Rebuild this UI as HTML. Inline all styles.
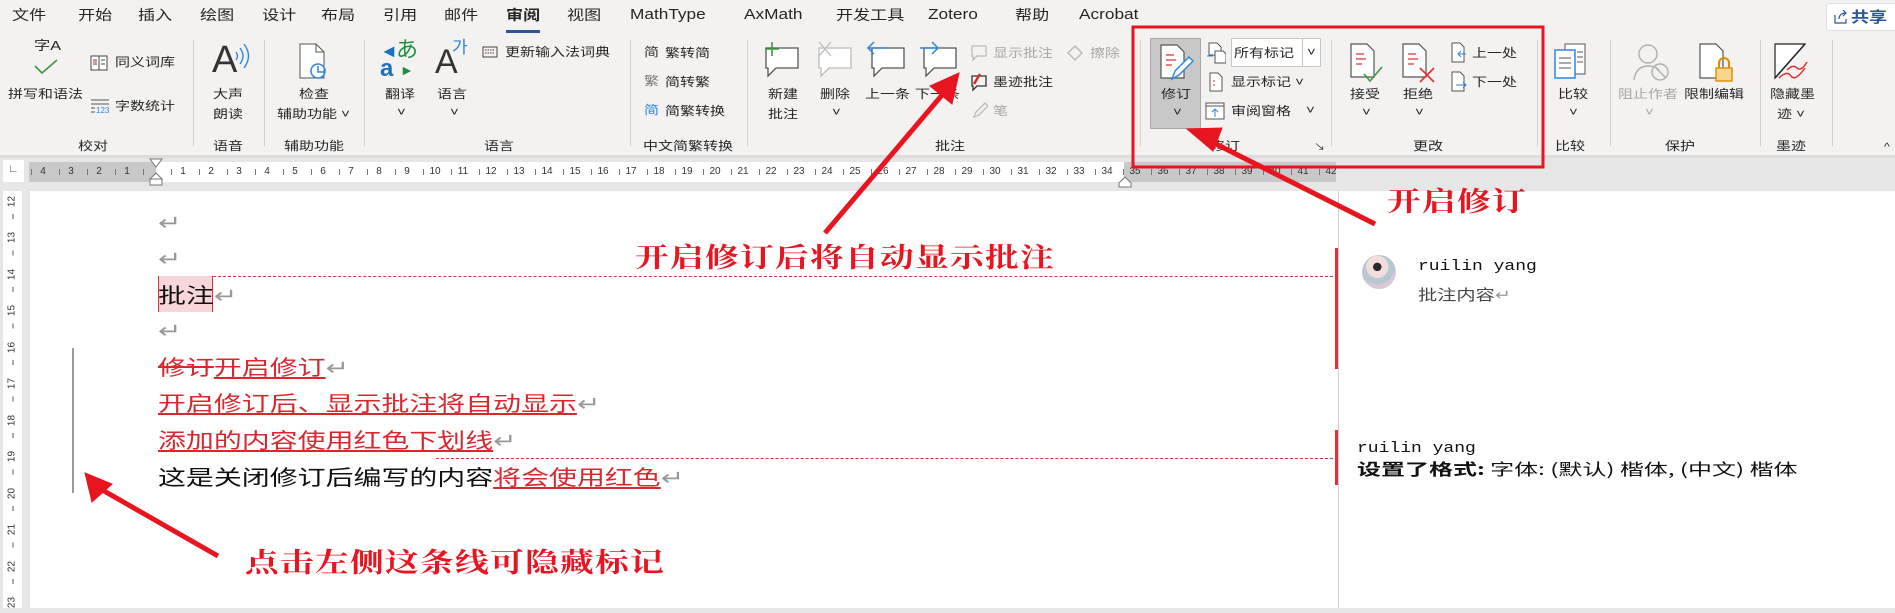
<!DOCTYPE html>
<html><head><meta charset="utf-8">
<style>
*{margin:0;padding:0;box-sizing:border-box}
body{width:1895px;height:608px;overflow:hidden;background:#e6e6e6;font-family:"Liberation Sans","Noto Sans CJK SC",sans-serif;position:relative;color:#262626}
.a{position:absolute;white-space:nowrap}
.s{transform:scaleX(1.28);transform-origin:0 50%}
.t{position:absolute;white-space:nowrap;font-size:12px;line-height:16px;transform:scaleX(1.25);transform-origin:0 50%;color:#262626}
.g{color:#a6a6a6}
.tab{position:absolute;top:6px;font-size:14px;line-height:18px;transform:scaleX(1.22);transform-origin:0 50%;color:#262626}
.sep{position:absolute;top:40px;width:1px;height:106px;background:#d0d0d0}
.rn{position:absolute;top:164px;font-size:10px;line-height:16px;color:#333;width:20px;text-align:center}
.vn{position:absolute;left:2px;width:20px;font-size:10px;color:#333;text-align:center;transform:rotate(-90deg)}
.doc{position:absolute;left:158px;font-size:21px;line-height:30px;font-family:"Noto Sans CJK SC",sans-serif;transform:scaleX(1.33);transform-origin:0 50%;white-space:nowrap;color:#111}
.r{color:#d9272e;text-decoration:underline;text-decoration-color:#d9272e}
.p{color:#999}
.ann{position:absolute;color:#e8141f;font-family:"Noto Serif CJK SC",serif;font-weight:bold;font-size:27px;line-height:30px;transform:scaleX(1.25);transform-origin:0 50%;white-space:nowrap;letter-spacing:1px}
</style></head><body>
<div class="a" style="left:0;top:0;width:1895px;height:155px;background:#f3f2f1"></div>
<div class="a" style="left:0;top:155px;width:1895px;height:3px;background:#dcdcdc"></div>
<div class="tab" style="left:12px">文件</div>
<div class="tab" style="left:78px">开始</div>
<div class="tab" style="left:138px">插入</div>
<div class="tab" style="left:200px">绘图</div>
<div class="tab" style="left:262px">设计</div>
<div class="tab" style="left:321px">布局</div>
<div class="tab" style="left:383px">引用</div>
<div class="tab" style="left:444px">邮件</div>
<div class="tab" style="left:506px;font-weight:bold">审阅</div>
<div class="a" style="left:506px;top:30px;width:34px;height:3px;background:#2b579a"></div>
<div class="tab" style="left:567px">视图</div>
<div class="tab" style="left:630px;font-size:15px;transform:scaleX(1.15)">MathType</div>
<div class="tab" style="left:744px;font-size:15px;transform:scaleX(1.15)">AxMath</div>
<div class="tab" style="left:836px">开发工具</div>
<div class="tab" style="left:928px;font-size:15px;transform:scaleX(1.15)">Zotero</div>
<div class="tab" style="left:1015px">帮助</div>
<div class="tab" style="left:1079px;font-size:15px;transform:scaleX(1.15)">Acrobat</div>
<div class="a" style="left:1826px;top:3px;width:72px;height:28px;background:#fff;border:1px solid #e0e0e0;border-radius:3px"></div>
<svg class="a" style="left:1834px;top:10px" width="14" height="14"><path d="M1 5v8h11V9M5 9c0-4 3-6 7-6M9 0l3 3-3 3" fill="none" stroke="#2b579a" stroke-width="1.2"/></svg>
<div class="a" style="left:1851px;top:6px;font-size:15px;font-weight:bold;color:#2b579a;transform:scaleX(1.2);transform-origin:0 50%">共享</div>

<div class="sep" style="left:193px"></div><div class="sep" style="left:264px"></div><div class="sep" style="left:364px"></div>
<div class="sep" style="left:630px"></div><div class="sep" style="left:747px"></div><div class="sep" style="left:1140px"></div>
<div class="sep" style="left:1331px"></div><div class="sep" style="left:1537px"></div><div class="sep" style="left:1610px"></div>
<div class="sep" style="left:1760px"></div><div class="sep" style="left:1832px"></div>

<div class="t" style="left:34px;top:38px;font-size:13px">字A</div>
<svg class="a" style="left:33px;top:58px" width="26" height="18"><path d="M2 8l7 7L24 2" fill="none" stroke="#3c9a3c" stroke-width="1.6"/></svg>
<div class="t" style="left:8px;top:86px">拼写和语法</div>
<svg class="a" style="left:90px;top:55px" width="18" height="16"><rect x="1" y="1" width="16" height="14" fill="#fff" stroke="#444"/><path d="M9 1v14M3 5h4M3 9h4M11 5h4M11 9h4" stroke="#444"/><path d="M3 7h4" stroke="#e03030"/></svg>
<div class="t" style="left:115px;top:54px">同义词库</div>
<svg class="a" style="left:90px;top:98px" width="22" height="16"><path d="M1 2h18M1 6h18M1 10h4M1 14h4" stroke="#555"/><text x="6" y="15" font-size="8" fill="#2e86de" font-family="Liberation Sans">123</text></svg>
<div class="t" style="left:115px;top:98px">字数统计</div>
<div class="t" style="left:78px;top:138px">校对</div>
<div class="a" style="left:212px;top:38px;font-size:38px;line-height:44px;font-family:'Liberation Sans';font-weight:300;color:#333">A</div>
<svg class="a" style="left:234px;top:42px" width="16" height="28"><path d="M2 10q3 4 0 8M6 6q6 8 0 16M10 2q9 12 0 24" fill="none" stroke="#2e86de" stroke-width="1.4"/></svg>
<div class="t" style="left:213px;top:86px">大声</div>
<div class="t" style="left:213px;top:106px">朗读</div>
<div class="t" style="left:213px;top:138px">语音</div>
<svg class="a" style="left:296px;top:42px" width="36" height="40"><path d="M4 2h16l8 8v26H4z" fill="#fff" stroke="#555"/><path d="M20 2v8h8" fill="none" stroke="#555"/><circle cx="22" cy="29" r="7" fill="none" stroke="#2e86de" stroke-width="1.5"/><path d="M22 24v6h6" fill="none" stroke="#2e86de" stroke-width="1.5"/></svg>
<div class="t" style="left:299px;top:86px">检查</div>
<div class="t" style="left:277px;top:106px">辅助功能 ˅</div>
<div class="t" style="left:284px;top:138px">辅助功能</div>
<div class="a" style="left:380px;top:42px;width:18px;height:18px;font-size:18px;font-weight:bold;color:#1f6fbf;line-height:18px">&#9668;</div>
<div class="a" style="left:396px;top:36px;font-size:22px;color:#1f8f3f;font-family:'Noto Sans CJK JP';line-height:24px">あ</div>
<div class="a" style="left:380px;top:56px;font-size:24px;color:#1f6fbf;font-weight:bold;line-height:26px">a</div>
<div class="a" style="left:400px;top:62px;font-size:14px;color:#1f8f3f;line-height:16px">&#9658;</div>
<div class="t" style="left:385px;top:86px">翻译</div><div class="t" style="left:397px;top:104px">˅</div>
<div class="a" style="left:435px;top:42px;font-size:34px;line-height:40px;font-weight:300;color:#333">A</div>
<div class="a" style="left:452px;top:36px;font-size:17px;line-height:20px;color:#2e86de;font-family:'Noto Sans CJK KR'">가</div>
<div class="t" style="left:437px;top:86px">语言</div><div class="t" style="left:450px;top:104px">˅</div>
<svg class="a" style="left:482px;top:46px" width="16" height="12"><rect x="1" y="1" width="14" height="10" fill="none" stroke="#444"/><path d="M3 4h10M3 7h10" stroke="#444" stroke-dasharray="1.5 1"/></svg>
<div class="t" style="left:505px;top:44px">更新输入法词典</div>
<div class="t" style="left:484px;top:138px">语言</div>
<div class="t" style="left:644px;top:44px;color:#333">简</div><div class="t" style="left:665px;top:45px">繁转简</div>
<div class="t" style="left:644px;top:73px;color:#777">繁</div><div class="t" style="left:665px;top:74px">简转繁</div>
<div class="t" style="left:644px;top:102px;color:#2e86de">简</div><div class="t" style="left:665px;top:103px">简繁转换</div>
<div class="t" style="left:643px;top:138px">中文简繁转换</div>
<svg class="a" style="left:762px;top:40px" width="42" height="40"><path d="M4 8h32v20H14l-8 8v-8H4z" fill="#fff" stroke="#555" stroke-width="1.3"/><path d="M10 2v14M3 9h14" stroke="#3c9a3c" stroke-width="1.6"/></svg>
<div class="t" style="left:768px;top:86px">新建</div><div class="t" style="left:768px;top:106px">批注</div>
<svg class="a" style="left:815px;top:40px" width="42" height="40"><path d="M4 8h32v20H14l-8 8v-8H4z" fill="#fff" stroke="#bbb" stroke-width="1.3"/><path d="M4 2l12 14M16 2L4 16" stroke="#bbb" stroke-width="1.3"/></svg>
<div class="t" style="left:820px;top:86px">删除</div><div class="t" style="left:832px;top:104px">˅</div>
<svg class="a" style="left:866px;top:40px" width="42" height="40"><path d="M6 8h32v20H16l-8 8v-8H6z" fill="#fff" stroke="#555" stroke-width="1.3"/><path d="M2 8h18M8 2L2 8l6 6" fill="none" stroke="#2e86de" stroke-width="1.5"/></svg>
<div class="t" style="left:865px;top:86px">上一条</div>
<svg class="a" style="left:918px;top:40px" width="42" height="40"><path d="M6 8h32v20H16l-8 8v-8H6z" fill="#fff" stroke="#555" stroke-width="1.3"/><path d="M2 8h18M14 2l6 6-6 6" fill="none" stroke="#2e86de" stroke-width="1.5"/></svg>
<div class="t" style="left:915px;top:86px">下一条</div>
<svg class="a" style="left:970px;top:44px" width="18" height="18"><path d="M2 2h14v10H7l-4 4v-4H2z" fill="none" stroke="#bbb" stroke-width="1.3"/></svg>
<div class="t g" style="left:993px;top:45px">显示批注</div>
<svg class="a" style="left:1066px;top:44px" width="18" height="18"><path d="M9 2l7 7-7 7-7-7z" fill="none" stroke="#bbb" stroke-width="1.5"/></svg>
<div class="t g" style="left:1090px;top:45px">擦除</div>
<svg class="a" style="left:970px;top:72px" width="18" height="20"><path d="M2 4h14v10H7l-4 4v-4H2z" fill="none" stroke="#333" stroke-width="1.3"/><path d="M4 12l6-10" stroke="#d9272e" stroke-width="2.5"/></svg>
<div class="t" style="left:993px;top:74px">墨迹批注</div>
<svg class="a" style="left:972px;top:101px" width="16" height="18"><path d="M2 16l2-5 9-9 3 3-9 9z" fill="none" stroke="#bbb" stroke-width="1.3"/></svg>
<div class="t g" style="left:993px;top:103px">笔</div>
<div class="t" style="left:935px;top:138px">批注</div>
<div class="a" style="left:1150px;top:38px;width:51px;height:91px;background:#c8c8c8;border:1px solid #a8a8a8"></div>
<svg class="a" style="left:1158px;top:43px" width="36" height="40"><path d="M3 2h16l7 7v26H3z" fill="#fff" stroke="#555" stroke-width="1.2"/><path d="M8 12h8M8 17h10M8 22h6" stroke="#e03030" stroke-width="1.3"/><path d="M14 36l3-8 14-14 4 4-14 14z" fill="#fff" stroke="#2e86de" stroke-width="1.5"/></svg>
<div class="t" style="left:1161px;top:86px">修订</div><div class="t" style="left:1173px;top:104px">˅</div>
<svg class="a" style="left:1206px;top:42px" width="20" height="22"><path d="M3 1h8l4 4v8H3z" fill="#fff" stroke="#555"/><path d="M9 9h8l3 3v9H9z" fill="#fff" stroke="#555"/><path d="M1 14h6" stroke="#2e86de"/></svg>
<div class="a" style="left:1231px;top:38px;width:90px;height:29px;background:#fff;border:1px solid #c6c6c6"></div>
<div class="a" style="left:1302px;top:38px;width:1px;height:29px;background:#c6c6c6"></div>
<div class="t" style="left:1234px;top:45px">所有标记</div><div class="t" style="left:1307px;top:44px">˅</div>
<svg class="a" style="left:1208px;top:72px" width="16" height="20"><path d="M2 1h8l4 4v14H2z" fill="#fff" stroke="#555"/><path d="M5 9h2M5 13h2" stroke="#e03030"/></svg>
<div class="t" style="left:1231px;top:74px">显示标记 ˅</div>
<svg class="a" style="left:1205px;top:102px" width="20" height="18"><rect x="1" y="1" width="18" height="16" fill="#fff" stroke="#555"/><path d="M1 4h18" stroke="#555"/><path d="M10 15V7M7 10l3-3 3 3" fill="none" stroke="#2e86de"/></svg>
<div class="t" style="left:1231px;top:103px">审阅窗格</div><div class="t" style="left:1306px;top:102px">˅</div>
<div class="t" style="left:1210px;top:138px">修订</div>
<div class="t" style="left:1314px;top:139px;font-size:9px">↘</div>
<svg class="a" style="left:1348px;top:42px" width="36" height="42"><path d="M3 2h16l7 7v26H3z" fill="#fff" stroke="#555" stroke-width="1.2"/><path d="M8 12h8M8 17h10M8 22h6" stroke="#e03030" stroke-width="1.3"/><path d="M16 32l6 7 12-14" fill="none" stroke="#3c9a3c" stroke-width="1.6"/></svg>
<div class="t" style="left:1350px;top:86px">接受</div><div class="t" style="left:1362px;top:104px">˅</div>
<svg class="a" style="left:1400px;top:42px" width="36" height="42"><path d="M3 2h16l7 7v26H3z" fill="#fff" stroke="#555" stroke-width="1.2"/><path d="M8 12h8M8 17h10M8 22h6" stroke="#e03030" stroke-width="1.3"/><path d="M20 26l14 14M34 26L20 40" stroke="#e03030" stroke-width="1.6"/></svg>
<div class="t" style="left:1403px;top:86px">拒绝</div><div class="t" style="left:1415px;top:104px">˅</div>
<svg class="a" style="left:1450px;top:42px" width="18" height="22"><path d="M2 1h8l4 4v15H2z" fill="#fff" stroke="#555"/><path d="M16 12H8M11 9l-3 3 3 3" fill="none" stroke="#2e86de"/></svg>
<div class="t" style="left:1472px;top:45px">上一处</div>
<svg class="a" style="left:1450px;top:71px" width="18" height="22"><path d="M2 1h8l4 4v15H2z" fill="#fff" stroke="#555"/><path d="M6 14h10M13 11l3 3-3 3" fill="none" stroke="#2e86de"/></svg>
<div class="t" style="left:1472px;top:74px">下一处</div>
<div class="t" style="left:1413px;top:138px">更改</div>
<svg class="a" style="left:1553px;top:42px" width="36" height="40"><path d="M12 2h20v30H12z" fill="#fff" stroke="#555"/><rect x="2" y="8" width="20" height="28" fill="#fff" stroke="#2e86de" stroke-width="1.5"/><path d="M6 16h12M6 21h12M6 26h12M24 10h6M24 15h6M24 20h6" stroke="#555"/></svg>
<div class="t" style="left:1558px;top:86px">比较</div><div class="t" style="left:1569px;top:104px">˅</div>
<div class="t" style="left:1555px;top:138px">比较</div>
<svg class="a" style="left:1632px;top:42px" width="40" height="40"><circle cx="16" cy="12" r="9" fill="none" stroke="#b0b0b0" stroke-width="1.4"/><path d="M2 38q2-14 14-14q8 0 11 4" fill="none" stroke="#b0b0b0" stroke-width="1.4"/><circle cx="28" cy="30" r="8" fill="none" stroke="#b0b0b0" stroke-width="1.4"/><path d="M22 24l12 12" stroke="#b0b0b0" stroke-width="1.4"/></svg>
<div class="t g" style="left:1618px;top:86px">阻止作者</div><div class="t g" style="left:1645px;top:104px">˅</div>
<svg class="a" style="left:1698px;top:42px" width="40" height="42"><path d="M2 2h16l7 7v27H2z" fill="#fff" stroke="#555" stroke-width="1.2"/><path d="M21 26v-5a5 5 0 0110 0v5" fill="none" stroke="#e08b00" stroke-width="2"/><rect x="18" y="26" width="16" height="13" fill="#fad48a" stroke="#e08b00" stroke-width="1.4"/></svg>
<div class="t" style="left:1684px;top:86px">限制编辑</div>
<div class="t" style="left:1665px;top:138px">保护</div>
<svg class="a" style="left:1773px;top:42px" width="38" height="40"><path d="M2 2h30L2 36z" fill="#fff" stroke="#222" stroke-width="1.2"/><path d="M2 36L32 2" stroke="#222" stroke-width="1.5"/><path d="M6 36q8-8 12-2t14-8M14 28q6-6 10-2t10-6" fill="none" stroke="#e03030" stroke-width="1.5"/></svg>
<div class="t" style="left:1770px;top:86px">隐藏墨</div>
<div class="t" style="left:1777px;top:106px">迹 ˅</div>
<div class="t" style="left:1776px;top:138px">墨迹</div>
<div class="t" style="left:1884px;top:140px;font-size:10px">^</div>

<div class="a" style="left:3px;top:160px;width:21px;height:22px;background:#fff"></div>
<div class="a" style="left:8px;top:163px;font-size:11px;font-weight:bold;color:#555">∟</div>
<div class="a" style="left:29px;top:162px;width:127px;height:20px;background:#c8c8c8"></div>
<div class="a" style="left:156px;top:162px;width:968px;height:20px;background:#fff"></div>
<div class="a" style="left:1124px;top:162px;width:212px;height:20px;background:#c8c8c8"></div>
<svg class="a" style="left:148px;top:158px" width="16" height="34"><path d="M2 1h12l-6 8z" fill="#fff" stroke="#777"/><path d="M8 15l6 6H2z M2 21h12v6H2z" fill="#fff" stroke="#777"/></svg>
<svg class="a" style="left:1118px;top:176px" width="14" height="12"><path d="M7 1l6 6v4H1V7z" fill="#fff" stroke="#777"/></svg>
<div style="position:absolute;left:0;top:0">
<div class="rn" style="left:33px">4</div><div class="rn" style="left:61px">3</div><div class="rn" style="left:89px">2</div><div class="rn" style="left:117px">1</div>
<div class="rn" style="left:173px">1</div><div class="rn" style="left:201px">2</div><div class="rn" style="left:229px">3</div><div class="rn" style="left:257px">4</div><div class="rn" style="left:285px">5</div><div class="rn" style="left:313px">6</div><div class="rn" style="left:341px">7</div><div class="rn" style="left:369px">8</div><div class="rn" style="left:397px">9</div><div class="rn" style="left:425px">10</div><div class="rn" style="left:453px">11</div><div class="rn" style="left:481px">12</div><div class="rn" style="left:509px">13</div><div class="rn" style="left:537px">14</div><div class="rn" style="left:565px">15</div><div class="rn" style="left:593px">16</div><div class="rn" style="left:621px">17</div><div class="rn" style="left:649px">18</div><div class="rn" style="left:677px">19</div><div class="rn" style="left:705px">20</div><div class="rn" style="left:733px">21</div><div class="rn" style="left:761px">22</div><div class="rn" style="left:789px">23</div><div class="rn" style="left:817px">24</div><div class="rn" style="left:845px">25</div><div class="rn" style="left:873px">26</div><div class="rn" style="left:901px">27</div><div class="rn" style="left:929px">28</div><div class="rn" style="left:957px">29</div><div class="rn" style="left:985px">30</div><div class="rn" style="left:1013px">31</div><div class="rn" style="left:1041px">32</div><div class="rn" style="left:1069px">33</div><div class="rn" style="left:1097px">34</div><div class="rn" style="left:1125px">35</div><div class="rn" style="left:1153px">36</div><div class="rn" style="left:1181px">37</div><div class="rn" style="left:1209px">38</div><div class="rn" style="left:1237px">39</div><div class="rn" style="left:1265px">40</div><div class="rn" style="left:1293px">41</div><div class="rn" style="left:1321px">42</div>
</div>
<svg class="a" style="left:0;top:167px" width="1340" height="10"><path d="M29 5h1340" stroke="#777" stroke-width="6" stroke-dasharray="1 27" stroke-dashoffset="-2"/></svg>

<div class="a" style="left:3px;top:191px;width:19px;height:417px;background:#fff"></div>
<div class="a" style="left:30px;top:191px;width:1865px;height:417px;background:#fff"></div>
<div class="vn" style="top:196px">12</div><div class="vn" style="top:232px">13</div><div class="vn" style="top:269px">14</div><div class="vn" style="top:305px">15</div><div class="vn" style="top:342px">16</div><div class="vn" style="top:378px">17</div><div class="vn" style="top:415px">18</div><div class="vn" style="top:451px">19</div><div class="vn" style="top:488px">20</div><div class="vn" style="top:524px">21</div><div class="vn" style="top:561px">22</div><div class="vn" style="top:597px">23</div>
<svg class="a" style="left:8px;top:214px" width="10" height="394"><path d="M5 0v400" stroke="#555" stroke-width="1" stroke-dasharray="5 31.5"/></svg>
<div class="a" style="left:1338px;top:191px;width:1px;height:417px;background:#cfcfcf"></div>
<div class="a" style="left:72px;top:348px;width:2px;height:145px;background:#9a9a9a"></div>
<div class="a" style="left:213px;top:276px;width:1125px;border-top:1px dashed #e0303a"></div>
<div class="a" style="left:436px;top:458px;width:902px;border-top:1px dashed #e0303a"></div>
<div class="a" style="left:158px;top:276px;width:55px;height:36px;background:#f8d7da;border-left:1px solid #e0303a;border-right:1px solid #e0303a"></div>
<div class="doc p" style="top:207px">↵</div>
<div class="doc p" style="top:243px">↵</div>
<div class="doc" style="top:280px">批注<span class="p">↵</span></div>
<div class="doc p" style="top:315px">↵</div>
<div class="doc" style="top:352px"><span style="color:#d9272e;text-decoration:line-through">修订</span><span class="r">开启修订</span><span class="p">↵</span></div>
<div class="doc" style="top:388px"><span class="r">开启修订后、显示批注将自动显示</span><span class="p">↵</span></div>
<div class="doc" style="top:425px"><span class="r">添加的内容使用红色下划线</span><span class="p">↵</span></div>
<div class="doc" style="top:462px">这是关闭修订后编写的内容<span class="r">将会使用红色</span><span class="p">↵</span></div>
<div class="a" style="left:1335px;top:248px;width:3px;height:121px;background:#e0303a"></div>
<div class="a" style="left:1335px;top:430px;width:3px;height:55px;background:#e0303a"></div>
<div class="a" style="left:1362px;top:255px;width:34px;height:34px;border-radius:50%;background:radial-gradient(circle at 45% 35%,#2a2a2a 0 14%,#f2dcdc 15% 38%,#b8c8d0 39% 60%,#d8c8d8 61%)"></div>
<div class="a" style="left:1418px;top:257px;font-family:'Liberation Mono',monospace;font-size:15px;line-height:20px;color:#111;transform:scaleX(1.2);transform-origin:0 50%">ruilin yang</div>
<div class="a s" style="left:1418px;top:285px;font-size:15px;line-height:20px;font-family:'Noto Sans CJK SC';color:#444">批注内容<span style="color:#999">↵</span></div>
<div class="a" style="left:1357px;top:439px;font-family:'Liberation Mono',monospace;font-size:15px;line-height:20px;color:#111;transform:scaleX(1.2);transform-origin:0 50%">ruilin yang</div>
<div class="a" style="left:1357px;top:458px;font-size:16px;line-height:20px;font-family:'Noto Sans CJK SC';color:#111;transform:scaleX(1.5);transform-origin:0 50%"><b>设置了格式:</b> 字体: (默认) 楷体, (中文) 楷体</div>
<div class="ann" style="left:635px;top:241px">开启修订后将自动显示批注</div>
<div class="ann" style="left:1387px;top:185px">开启修订</div>
<div class="ann" style="left:245px;top:546px">点击左侧这条线可隐藏标记</div>
<svg class="a" style="left:0;top:0" width="1895" height="608">
<rect x="1133" y="27" width="410" height="140" fill="none" stroke="#e8141f" stroke-width="3"/>
<g fill="#e8141f" stroke="#e8141f">
<line x1="825" y1="233" x2="948" y2="88" stroke-width="5"/>
<polygon points="959,73 930,86 952,104" />
<line x1="1375" y1="224" x2="1202" y2="137" stroke-width="5"/>
<polygon points="1187,129 1213,151 1222,128"/>
<line x1="218" y1="556" x2="97" y2="487" stroke-width="5"/>
<polygon points="85,473 92,502 112,484"/>
</g>
</svg>
</body></html>
